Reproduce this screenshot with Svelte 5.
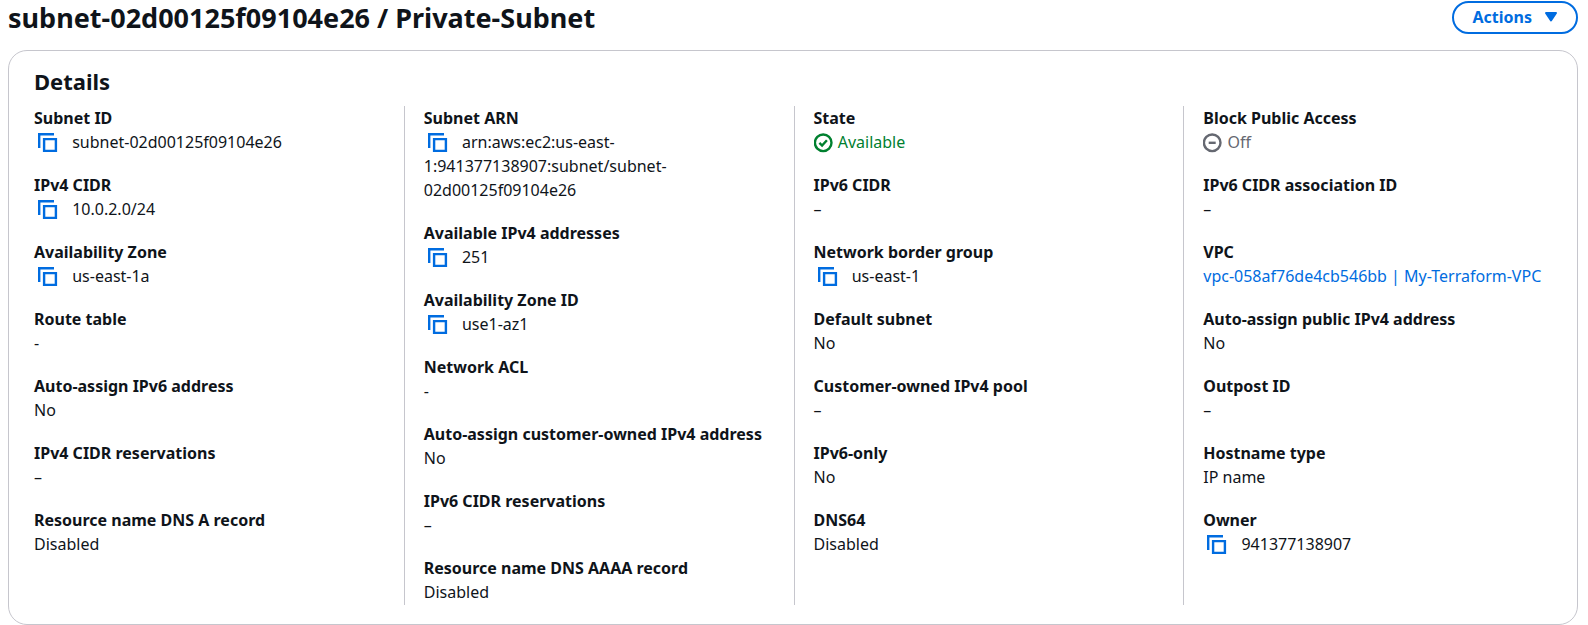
<script>
  const columns = [
    [
      { label: "Subnet ID", value: "subnet-02d00125f09104e26", copy: true },
      { label: "IPv4 CIDR", value: "10.0.2.0/24", copy: true },
      { label: "Availability Zone", value: "us-east-1a", copy: true },
      { label: "Route table", value: "-" },
      { label: "Auto-assign IPv6 address", value: "No" },
      { label: "IPv4 CIDR reservations", value: "–" },
      { label: "Resource name DNS A record", value: "Disabled" }
    ],
    [
      {
        label: "Subnet ARN",
        value: "arn:aws:ec2:us-east-1:941377138907:subnet/subnet-02d00125f09104e26",
        copy: true,
        wrap: true
      },
      { label: "Available IPv4 addresses", value: "251", copy: true },
      { label: "Availability Zone ID", value: "use1-az1", copy: true },
      { label: "Network ACL", value: "-" },
      { label: "Auto-assign customer-owned IPv4 address", value: "No" },
      { label: "IPv6 CIDR reservations", value: "–" },
      { label: "Resource name DNS AAAA record", value: "Disabled" }
    ],
    [
      { label: "State", value: "Available", status: "success" },
      { label: "IPv6 CIDR", value: "–" },
      { label: "Network border group", value: "us-east-1", copy: true },
      { label: "Default subnet", value: "No" },
      { label: "Customer-owned IPv4 pool", value: "–" },
      { label: "IPv6-only", value: "No" },
      { label: "DNS64", value: "Disabled" }
    ],
    [
      { label: "Block Public Access", value: "Off", status: "stopped" },
      { label: "IPv6 CIDR association ID", value: "–" },
      { label: "VPC", value: "vpc-058af76de4cb546bb | My-Terraform-VPC", link: true },
      { label: "Auto-assign public IPv4 address", value: "No" },
      { label: "Outpost ID", value: "–" },
      { label: "Hostname type", value: "IP name" },
      { label: "Owner", value: "941377138907", copy: true }
    ]
  ];

  const copyValue = value => navigator.clipboard?.writeText(value);

  // long values may break after any hyphen
  const pieces = item => (item.wrap ? item.value.split(/(?<=-)/) : [item.value]);
</script>

<header class="header">
  <h1>subnet-02d00125f09104e26 / Private-Subnet</h1>
  <button class="actions" type="button">
    Actions
    <svg viewBox="0 0 14 12" width="14" height="12" aria-hidden="true">
      <path d="M2 2h10L7 9.5z" />
    </svg>
  </button>
</header>

<section class="card">
  <h2>Details</h2>
  <div class="columns">
    {#each columns as items}
      <dl class="column">
        {#each items as item}
          <div class="item">
            <dt>{item.label}</dt>
            <dd class={item.status}>
              {#if item.copy}
                <button
                  class="copy"
                  type="button"
                  aria-label="Copy {item.label}"
                  on:click={() => copyValue(item.value)}
                >
                  <svg viewBox="0 0 20 20" width="20" height="20" aria-hidden="true">
                    <path d="M1.2 15V1.2H16" />
                    <path d="M6.1 6.1h11.8v11.8H6.1z" />
                  </svg>
                </button>
              {:else if item.status}
                <svg class="status" viewBox="0 0 20 20" width="20" height="20" aria-hidden="true">
                  <circle cx="9.2" cy="9.8" r="8.3" />
                  {#if item.status === "success"}
                    <path d="M5.4 9.8l2.7 2.7 4.8-5.2" />
                  {:else}
                    <path d="M5.7 9.8h7" />
                  {/if}
                </svg>
              {/if}
              {#if item.link}
                <a href="#vpc">{item.value}</a>
              {:else}
                <span>{#each pieces(item) as piece}{piece}<wbr />{/each}</span>
              {/if}
            </dd>
          </div>
        {/each}
      </dl>
    {/each}
  </div>
</section>

<style>
  :global(body) {
    background: #fff;
    color: #0f141a;
    font-family: "Noto Sans", "Open Sans", sans-serif;
    font-size: 16px;
    line-height: 24px;
  }

  .header {
    display: flex;
    align-items: flex-start;
    justify-content: space-between;
    padding: 1px 10px 0 8px;
  }

  h1 {
    margin: 0;
    font-size: 27px;
    line-height: 34px;
    font-weight: 700;
  }

  .actions {
    display: flex;
    align-items: center;
    gap: 12px;
    height: 33px;
    padding: 0 18px 2px 19px;
    background: #fff;
    border: 2px solid #006ce0;
    border-radius: 20px;
    color: #006ce0;
    font: inherit;
    font-weight: 700;
    cursor: pointer;
  }

  .actions path {
    fill: currentColor;
    stroke: currentColor;
    stroke-width: 2;
    stroke-linejoin: round;
  }

  .card {
    margin: 15px 10px 0 8px;
    padding: 15px 24px 19px 5px;
    border: 1px solid #c6c6cd;
    border-radius: 19px;
  }

  h2 {
    margin: 0 0 10px 20px;
    font-size: 22px;
    line-height: 30px;
    font-weight: 700;
  }

  .columns {
    display: grid;
    grid-template-columns: repeat(4, minmax(0, 1fr));
    column-gap: 20px;
  }

  .column {
    display: flex;
    flex-direction: column;
    gap: 19px;
    margin: 0;
    padding: 0 0 1px 19px;
    border-left: 1px solid #c6c6cd;
  }

  .column:first-child {
    border-left-color: transparent;
  }

  dt {
    font-weight: 700;
  }

  dd {
    margin: 0;
  }

  .copy {
    padding: 0;
    margin: 0 10px 0 4px;
    background: none;
    border: 0;
    height: 20px;
    vertical-align: top;
    cursor: pointer;
  }

  svg {
    display: block;
  }

  .copy svg {
    margin-top: 3px;
  }

  .copy path {
    fill: none;
    stroke: #006ce0;
    stroke-width: 2.4;
  }

  .status {
    display: inline-block;
    margin-top: 3px;
    vertical-align: top;
    fill: none;
    stroke: currentColor;
    stroke-width: 2.4;
  }

  .success {
    color: #00802f;
  }

  .stopped {
    color: #656871;
  }

  a {
    color: #006ce0;
    text-decoration: none;
  }
</style>
